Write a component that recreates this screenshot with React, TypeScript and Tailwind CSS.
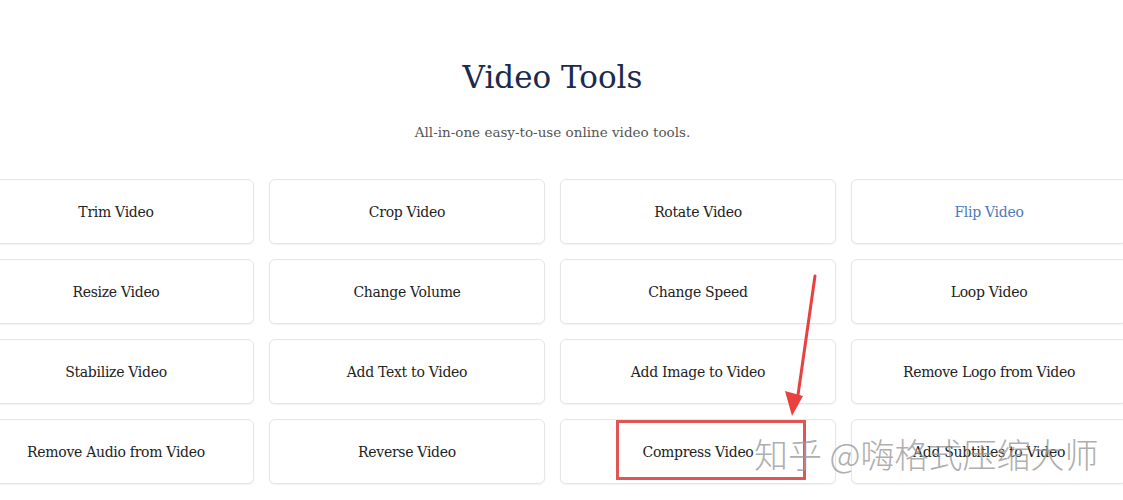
const TOOLS = [
  "Trim Video",
  "Crop Video",
  "Rotate Video",
  "Flip Video",
  "Resize Video",
  "Change Volume",
  "Change Speed",
  "Loop Video",
  "Stabilize Video",
  "Add Text to Video",
  "Add Image to Video",
  "Remove Logo from Video",
  "Remove Audio from Video",
  "Reverse Video",
  "Compress Video",
  "Add Subtitles to Video",
];

const slab = { fontFamily: '"DejaVu Serif", "Liberation Serif", serif' };

function ToolCard({ name }: { name: string }) {
  const active = name === "Flip Video";
  const marked = name === "Compress Video";
  return (
    <div className="relative flex h-[65px] items-center justify-center rounded-md border border-[#e6e6e6] bg-white pt-[2px] shadow-[0_1px_2px_rgba(0,0,0,0.06)]">
      <span className={`text-[14px] tracking-[-0.3px] ${active ? "text-[#4f78b8]" : "text-[#222]"}`}>{name}</span>
      {marked && (
        <div className="absolute left-[55px] top-[0px] h-[60px] w-[190px] border-[3px] border-[#e05555]" />
      )}
    </div>
  );
}

export default function App() {
  return (
    <div className="relative h-[500px] w-[1123px] overflow-hidden bg-white" style={slab}>
      <div className="ml-[-22px] w-[1149px]">
        <h1 className="pt-[55px] text-center text-[31px] leading-[44px] text-[#1b2a4e]">Video Tools</h1>
        <p className="mt-[23px] text-center text-[13.5px] leading-[20px] text-[#555]">All-in-one easy-to-use online video tools.</p>
        <div className="mt-[37px] grid grid-cols-4 gap-x-[15px] gap-y-[15px]">
          {TOOLS.map((t) => (
            <ToolCard key={t} name={t} />
          ))}
        </div>
      </div>

      {/* annotation arrow */}
      <svg className="pointer-events-none absolute left-0 top-0" width="1123" height="500">
        <line x1="815" y1="276" x2="798" y2="395" stroke="#ea4040" strokeWidth="3" strokeLinecap="round" />
        <polygon points="785,391 803,396 792,416" fill="#ea4040" />
      </svg>

      {/* watermark */}
      <div
        className="pointer-events-none absolute left-[754px] top-[434px] whitespace-nowrap text-[34px] leading-[40px] text-[#9a9a9a] opacity-80"
        style={{ fontFamily: '"Noto Sans CJK SC", sans-serif', fontWeight: 300 }}
      >
        知乎 @嗨格式压缩大师
      </div>
    </div>
  );
}
